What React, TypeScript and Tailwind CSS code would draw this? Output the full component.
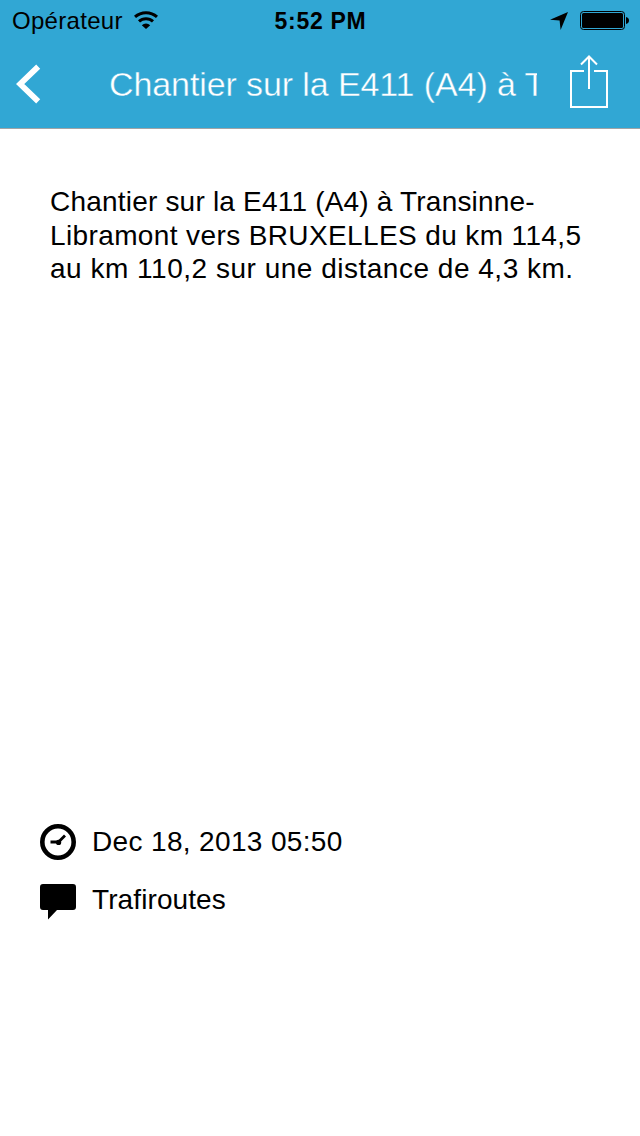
import type { ReactNode } from 'react'

interface MetaRowProps {
  icon: ReactNode
  children: ReactNode
}

const message = [
  { text: 'Chantier sur la E411 (A4) à Transinne-', className: 'tracking-[0.2px]' },
  { text: 'Libramont vers BRUXELLES du km 114,5', className: 'tracking-[0.38px]' },
  { text: 'au km 110,2 sur une distance de 4,3 km.', className: 'tracking-[0.51px]' },
]

function WifiIcon() {
  return (
    <svg className="mb-0.5" width="24" height="18" viewBox="0 0 24 18" fill="none" stroke="#000" strokeWidth="3">
      <path d="M1 5.9A16.3 16.3 0 0 1 23 5.9" />
      <path d="M5 10.4A10.3 10.3 0 0 1 19 10.4" />
      <path d="M12 18L7.8 14.2A6 6 0 0 1 16.2 14.2Z" fill="#000" stroke="none" />
    </svg>
  )
}

function BatteryIcon() {
  return (
    <svg className="mb-0.5" width="49" height="19" viewBox="0 0 49 19">
      <rect x="0.5" y="0.5" width="44" height="18" rx="3" fill="none" stroke="#000" />
      <rect x="2" y="2" width="41" height="15" rx="1.5" fill="#000" />
      <path d="M46 6Q49 6.6 49 9.5T46 13Z" fill="#000" />
    </svg>
  )
}

function StatusBar() {
  return (
    <div className="grid h-10 grid-cols-3 items-center pl-3 pr-[11px] pt-px">
      <div className="flex items-center gap-[11px]">
        <span className="text-[24px] leading-10 tracking-[0.3px]">Opérateur</span>
        <WifiIcon />
      </div>
      <span className="text-center text-[23px] font-bold leading-10 tracking-[0.7px]">5:52 PM</span>
      <div className="flex items-center justify-end gap-3">
        <svg width="18" height="18" viewBox="0 0 18 18">
          <path d="M18 0L10.6 18L9.6 8.6L0 7.8Z" fill="#000" />
        </svg>
        <BatteryIcon />
      </div>
    </div>
  )
}

function NavBar() {
  return (
    <div className="flex h-[88px] items-center pl-4 pr-8 text-white">
      <svg className="shrink-0" width="25" height="40" viewBox="0 0 25 40">
        <path d="M22.2 2.7L4.2 20L22.2 37.3" fill="none" stroke="currentColor" strokeWidth="5.8" />
      </svg>
      <h1 className="ml-[68px] w-[428px] overflow-hidden whitespace-nowrap text-[34px] leading-[88px] tracking-[-0.1px] [-webkit-text-stroke:0.4px_#31a7d4]">
        Chantier sur la E411 (A4) à Transinne-Libramont
      </h1>
      <svg className="mb-[6px] ml-[33px] shrink-0" width="38" height="53" viewBox="0 0 38 53" fill="none" stroke="currentColor" strokeWidth="2">
        <path d="M14 16H1V52H37V16H24" />
        <path d="M19 34V1.5M11 9.5L19 1.5L27 9.5" />
      </svg>
    </div>
  )
}

function MetaRow({ icon, children }: MetaRowProps) {
  return (
    <div className="flex h-9 items-center gap-4">
      {icon}
      <span className="text-[28px] leading-9">{children}</span>
    </div>
  )
}

export default function App() {
  return (
    <div className="flex h-[1136px] w-[640px] flex-col overflow-hidden bg-white font-['Liberation_Sans',sans-serif] text-black">
      <header className="h-[129px] border-b border-[#a0a4a6] bg-[#31a7d4]">
        <StatusBar />
        <NavBar />
      </header>
      <main className="mt-[56px] h-[639px] px-[50px]">
        {message.map(line => (
          <p key={line.text} className="whitespace-nowrap text-[28px] leading-[33.6px]">
            <span className={line.className}>{line.text}</span>
          </p>
        ))}
      </main>
      <footer className="flex flex-col gap-[22px] pl-10">
        <MetaRow
          icon={
            <svg width="36" height="36" viewBox="0 0 36 36" fill="none" stroke="#000">
              <circle cx="18" cy="18" r="15.7" strokeWidth="4.6" />
              <path d="M10.5 18H18.5L25 11.5" strokeWidth="2.8" />
              <circle cx="18.6" cy="18.4" r="2.6" fill="#000" stroke="none" />
            </svg>
          }
        >
          <span className="tracking-[0.35px]">Dec 18, 2013 05:50</span>
        </MetaRow>
        <MetaRow
          icon={
            <svg className="mt-1" width="36" height="36" viewBox="0 0 36 36">
              <path d="M3 0H33Q36 0 36 3V23Q36 26 33 26H17L8 35.5V26H3Q0 26 0 23V3Q0 0 3 0Z" fill="#000" />
            </svg>
          }
        >
          <span className="tracking-[0.1px]">Trafiroutes</span>
        </MetaRow>
      </footer>
    </div>
  )
}
